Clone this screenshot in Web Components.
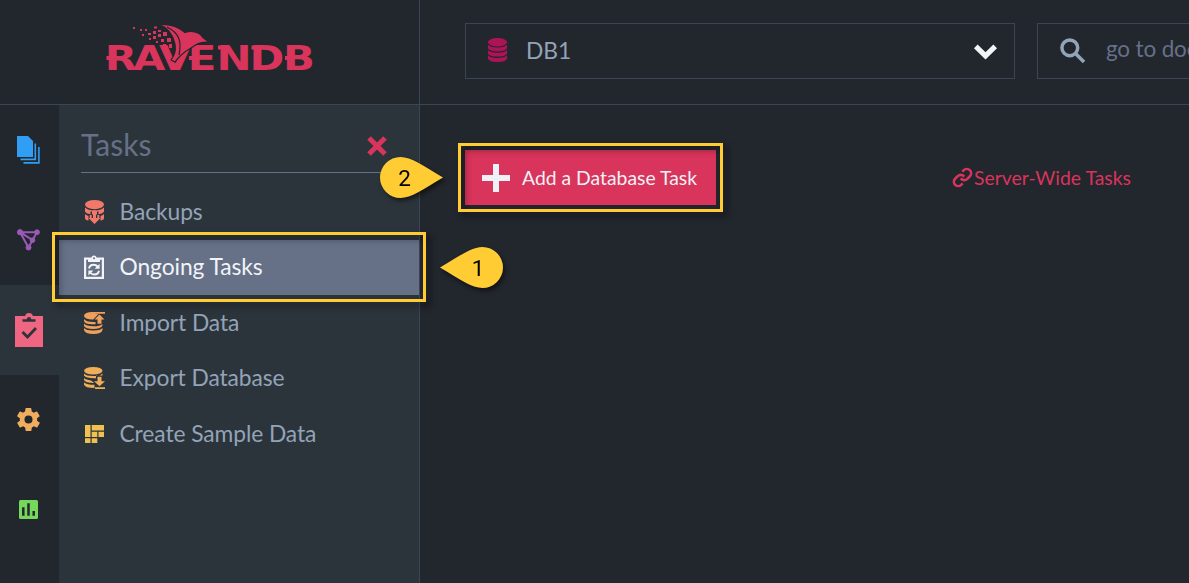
<!DOCTYPE html>
<html lang="en">
<head>
<meta charset="utf-8">
<title>RavenDB Studio</title>
<style>
html,body{margin:0;height:100%;overflow:hidden;background:#22262d}
body{font-family:Lato,sans-serif;color:#93a3b8}
</style>
</head>
<body>
<studio-app></studio-app>
<script>
const define = (name, html, setup) => customElements.define(name, class extends HTMLElement {
  constructor() {
    super();
    this.attachShadow({mode: 'open'}).innerHTML = html;
  }
  connectedCallback() { if (setup) setup(this, this.shadowRoot); }
});

const icons = {
  documents: ['0 0 23 28', '<path fill="#2f9ef4" d="M0 0h11l5 5v16H0z"/><path fill="none" stroke="#2f9ef4" stroke-width="1.6" d="M18.300 7.500v15.900H3.500M21.900 11v15.900H6.500"/>'],
  graph: ['0 0 23 22', '<g stroke="#9b59b6" fill="#9b59b6"><path fill="none" stroke-width="2" d="M3 3.200H20M3 3.200L11.500 18.500M3 3.200L15.500 11.200L20 3.200M15.500 11.200L11.500 18.500"/><circle cx="3" cy="3.200" r="2.600"/><circle cx="20" cy="3.200" r="2.400"/><circle cx="15.500" cy="11.200" r="2.300"/><circle cx="11.500" cy="18.500" r="2.500"/></g>'],
  tasks: ['0 0 28 34', '<path fill="#f06581" d="M0 3h10.200Q10.600 0 14 0t3.800 3H28v31H0z"/><path fill="#2c343b" d="M7.500 6.200h4.300a2.200 2.200 0 0 1 4.400 0h4.300v2.500h-13z"/><path fill="none" stroke="#2c343b" stroke-width="2.800" d="M7.500 19l5 5 8.500-9"/>'],
  gear: ['2 2 20 20', '<path fill="#f0ad5e" d="M19.400 13c0-.3.100-.6.100-1s0-.7-.1-1l2.100-1.600a.5.500 0 0 0 .1-.6l-2-3.500a.5.500 0 0 0-.6-.2l-2.500 1a7 7 0 0 0-1.700-1l-.4-2.600a.5.500 0 0 0-.5-.5h-4a.5.500 0 0 0-.5.500L9 5.100a7 7 0 0 0-1.700 1l-2.500-1a.5.500 0 0 0-.6.200l-2 3.500a.5.500 0 0 0 .1.600L4.500 11a8 8 0 0 0 0 2l-2.100 1.600a.5.500 0 0 0-.1.600l2 3.500c.1.200.4.300.6.200l2.500-1a7 7 0 0 0 1.700 1l.4 2.600c0 .3.200.5.500.5h4c.3 0 .5-.2.500-.5l.4-2.600a7 7 0 0 0 1.700-1l2.500 1c.2.100.5 0 .6-.2l2-3.500a.5.500 0 0 0-.1-.6zM12 15.500a3.500 3.500 0 1 1 0-7 3.500 3.500 0 0 1 0 7z"/>'],
  stats: ['0 0 19 19', '<rect width="19" height="19" rx="1.500" fill="#76d85b"/><path stroke="#22262d" stroke-width="2.500" d="M4.300 7.200v8.500M9.500 3.300v12.400M14.700 11v4.700"/>'],
  backups: ['0 0 19 24', '<g fill="#f2786b"><ellipse cx="9.500" cy="4.600" rx="9.500" ry="4.600"/><path d="M0 7.500q3 3 9.500 3t9.500-3v4.200q-1.500 2-5.500 2.500V11.600H12v2.800H7v-2.800H5.500v2.600Q1.500 13.700 0 11.700zM0 14q1.500 1.500 3.500 2v4.500Q0 20 0 18zM19 14q-1.500 1.500-3.500 2v4.500Q19 20 19 18z"/><path d="M8 10.500h3V18h4.500l-6 6-6-6H8zM4.700 15h2v4h-2zM12.300 15h2v4h-2z"/></g>'],
  ongoing: ['0 0 20 24', '<path fill="none" stroke="#f2f4f8" stroke-width="2.200" d="M1.100 3.600h17.800v19.300H1.100z"/><path fill="#f2f4f8" d="M4 3h3.500a2.500 2.500 0 0 1 5 0H16v4H4z"/><circle cx="10" cy="3.200" r="1" fill="#667087"/><path fill="none" stroke="#f2f4f8" stroke-width="1.900" d="M5 13.500q.7-3.700 4.700-3.700 2.400 0 4.200 2M15 15.700q-.8 3.800-4.800 3.800-2.500 0-4.200-2"/><path fill="#f2f4f8" d="M15.600 8.800v5h-5zM4.400 20.500v-5h5z"/>'],
  import: ['0 0 21 22', '<g fill="#efa05a"><path d="M0 3.500Q1 0 8 0h3.500v2h3L9.300 7.500H7Q0 7 0 3.500z"/><path d="M0 7q2 3 9.300 3h2.200v2.200Q1 13 0 9zM0 11.500q2 2.800 9.300 2.800 7 0 9-2.300v2q-2 3-9.300 3T0 14zM0 16q2 2.500 9.300 2.500T18.500 16v2q-1 4-9.200 4T0 18z"/><path d="M10 0h11v1.700H10zM15.500 2.500l5 5h-3v4.300h-4V7.500h-3z"/></g>'],
  export: ['0 0 21 22', '<g fill="#f0ae5a"><ellipse cx="9.300" cy="3.800" rx="9.200" ry="3.800"/><path d="M0 6.500q2 2.500 9.300 2.500t9.200-2.500v2H12v2.700Q2 11.500 0 8.500zM0 11q2 2 7 2.400l3.300 2.700Q1 16 0 13zM0 15.500q3 2.300 10.500 2.300v3.300Q1 21 0 17.500z"/><path d="M13.500 9.800h4v4.500h3.500l-5.500 5-5.500-5h3.500zM11 20.200h10V22H11z"/></g>'],
  sample: ['0 0 19 18', '<path fill="#f0c150" d="M0 0h5.500v12H0zM6.700 0H19v5.500H6.700zM6.700 6.700h5.600V12H6.700zM13.500 6.700H19V12h-5.500zM0 13.200h5.500V18H0zM6.700 13.200h5.600V18H6.700z"/>'],
  database: ['0 0 18 24', '<g fill="#ad1457"><ellipse cx="9" cy="4.200" rx="9" ry="4.200"/><path d="M0 6.500q2 3 9 3t9-3v4q-2 3-9 3t-9-3zM0 12q2 2.800 9 2.800t9-2.800v3.700q-2 2.900-9 2.900t-9-2.900zM0 17.200q2 2.700 9 2.700t9-2.700v3.300Q17 24 9 24T0 20.500z"/></g>'],
  chevron: ['0 0 23 16', '<path fill="none" stroke="#f1f6f8" stroke-width="5.200" d="M1.800 2.300l9.700 9.500 9.700-9.500"/>'],
  search: ['0 0 26 26', '<circle cx="9.800" cy="9.800" r="7.900" fill="none" stroke="#93a3b8" stroke-width="3.500"/><path stroke="#93a3b8" stroke-width="3.500" d="M15 15l9 9"/>'],
  close: ['0 0 20 20', '<path stroke="#d9345b" stroke-width="5" d="M2 2l16 16M18 2L2 18"/>'],
  plus: ['0 0 28 28', '<path stroke="#f0f1f6" stroke-width="6" d="M14 0v28M0 14h28"/>'],
  link: ['1 1 22 22', '<path fill="none" stroke="#d9345b" stroke-width="3" d="M10 13a5 5 0 0 0 7.540.540l3-3a5 5 0 0 0-7.070-7.070l-1.720 1.710M14 11a5 5 0 0 0-7.540-.540l-3 3a5 5 0 0 0 7.070 7.070l1.710-1.710"/>']
};

define('ui-icon', '<style>:host{display:block;flex:none}svg{display:block;width:100%;height:100%;overflow:visible}</style><svg preserveAspectRatio="none"></svg>', (el, root) => {
  const [box, body] = icons[el.getAttribute('name')];
  const svg = root.querySelector('svg');
  svg.setAttribute('viewBox', box);
  svg.innerHTML = body;
  const [, , w, h] = box.split(' ');
  el.style.width = (el.getAttribute('w') || w) + 'px';
  el.style.height = (el.getAttribute('h') || h) + 'px';
});

define('raven-logo', `<style>:host{display:block;width:210px;height:48px}svg{display:block;overflow:visible}
text{font:bold 33.500px "DejaVu Sans",sans-serif;fill:#d9345b}</style>
<svg width="210" height="48" viewBox="0 0 210 48">
<text transform="scale(1.25 1)" x="-0.300 22.400 43.200 66.200 89.200 115.600 142.500" y="44.800">RAVENDB</text>
<path fill="#d9345b" d="M1.500 31h4v4h-4zM84 31h4v4h-4zM180 31h4v4h-4zM113 20.500h4v4h-4zM146.500 20.500h4v4h-4z"/>
<path fill="#d9345b" stroke="#22262d" stroke-width="1.200" d="M54-.5C66-1 74 2 80 7.500c6-2 14-1 17 4 2 2 5 4 7.500 6C97 16 91 19 86 23 79 27 75 30 70 37l-4-2c4-6 5-9 4-16C68 10 64 3 54-.5z"/>
<path fill="none" stroke="#22262d" stroke-width="1.200" d="M62 2c12 6 15 14 12 28"/>
<path fill="#d9345b" d="M28 2h2v2h-2zM35 4h2v2h-2zM40 4h2v2h-2zM49 1.500h3v2h-3zM37 9h2v2h-2zM43 8h3v2h-3zM48 6h3v3h-3zM53 5h3v2h-3zM44 13h2v2h-2zM48 11h3v3h-3zM53 9h3v3h-3zM58 7h4v4h-4zM51 16h2v2h-2zM56 14h3v3h-3zM62 13h4v4h-4zM58 19h3v2h-3zM64 19h3v4h-3z"/>
</svg>`);

define('rail-item', `<style>:host{display:flex;box-sizing:border-box;height:90px;align-items:center;justify-content:center;padding:0 2px 1px 0}:host([active]){background:#2c343b;padding-bottom:0}</style><slot></slot>`);

define('menu-item', `<style>:host{display:flex;box-sizing:border-box;height:55.500px;align-items:center;padding-left:24.500px;font-size:22.800px;color:#93a3b8;white-space:nowrap}
:host([active]){background:#667087;color:#f2f4f8}
.i{width:22px;margin:0 14px 0 0;display:flex;justify-content:center}
:host([active]) .i{width:21px;margin:0 15px 1px 0}
.t{letter-spacing:-.08px;padding-bottom:2px}</style><span class="i"><slot name="icon"></slot></span><span class="t"><slot></slot></span>`);

define('side-panel', `<style>:host{display:block;width:360px;background:#2c343b;border-right:1px solid #3b4554}
header{display:flex;height:67px;margin:0 22px 11px;border-bottom:1px solid #667087;align-items:center;justify-content:space-between;font-size:30px;color:#667087}
header ui-icon{margin:15px 10px 0 0}header span{margin-top:11px}</style>
<header><span>Tasks</span><ui-icon name="close"></ui-icon></header>
<menu-item><ui-icon slot="icon" name="backups"></ui-icon>Backups</menu-item>
<menu-item active><ui-icon slot="icon" name="ongoing"></ui-icon>Ongoing Tasks</menu-item>
<menu-item><ui-icon slot="icon" name="import"></ui-icon>Import Data</menu-item>
<menu-item><ui-icon slot="icon" name="export"></ui-icon>Export Database</menu-item>
<menu-item><ui-icon slot="icon" name="sample"></ui-icon>Create Sample Data</menu-item>`);

define('top-bar', `<style>:host{display:flex;height:104px;border-bottom:1px solid #3b4554;overflow:hidden}
.brand{width:419px;flex:none;border-right:1px solid #3b4554;display:flex;box-sizing:content-box;align-items:center;justify-content:center}
raven-logo{margin-top:-6px}
.field{box-sizing:border-box;height:56px;margin-top:23px;border:1px solid #3b4554;display:flex;align-items:center;flex:none;font-size:22.800px;padding-bottom:2px}
.db{width:550px;margin-left:45px;padding-left:22px;padding-right:17px}.db span{margin-left:19px;flex:1}.db ui-icon:last-child{margin-top:3px}
.search{width:300px;margin-left:22px;padding-left:22px;color:#667087;white-space:nowrap;font-size:22.500px}.search ui-icon{margin-top:1px}.search span{margin:-4px 0 0 20px;letter-spacing:-.15px}</style>
<div class="brand"><raven-logo></raven-logo></div>
<div class="field db"><ui-icon name="database" w="19"></ui-icon><span>DB1</span><ui-icon name="chevron"></ui-icon></div>
<div class="field search"><ui-icon name="search"></ui-icon><span>go to doc</span></div>`);

define('task-button', `<style>:host{display:flex;width:251px;height:55px;box-sizing:border-box;padding-left:17px;align-items:center;background:#d9345b;color:#f0f1f6;font-size:19.350px;white-space:nowrap}span{margin-left:12px}</style><ui-icon name="plus"></ui-icon><span><slot></slot></span>`);

define('server-link', `<style>:host{display:flex;align-items:center;color:#d9345b;font-size:19.400px;white-space:nowrap;height:55px}span{margin-left:1.500px}ui-icon{margin:0 .5px 1px 0}</style><ui-icon name="link" w="19" h="19"></ui-icon><span><slot></slot></span>`);

define('highlight-frame', `<style>:host{display:block;position:absolute;box-sizing:border-box;border:3px solid #ffcc33;filter:drop-shadow(4px 4px 3px rgba(0,0,0,.5))}</style>`);

define('callout-pin', `<style>:host{display:block;position:absolute;width:63px;height:41px;filter:drop-shadow(2px 3px 2px rgba(0,0,0,.5))}
svg{display:block;overflow:visible}:host([flip]) path{transform:translateX(63px) scaleX(-1)}text{font:22.500px Roboto,sans-serif;fill:#000;text-anchor:middle}</style>
<svg width="63" height="41"><path fill="#ffcc33" d="M20.500 0C31 0 43 8.500 63 20.500 43 32.500 31 41 20.500 41a20.500 20.500 0 0 1 0-41z"/><text y="29"></text></svg>`, (el, root) => {
  const t = root.querySelector('text');
  t.textContent = el.getAttribute('label');
  t.setAttribute('x', el.hasAttribute('flip') ? 38 : 24.5);
});

define('studio-app', `<style>:host{display:flex;flex-direction:column;position:relative;height:583px;overflow:hidden;background:#22262d}
.body{display:flex;flex:1}nav{width:59px;flex:none}
main{flex:1;display:flex;justify-content:space-between;align-items:flex-start;padding:45px 58px 0 45px}
.f1{left:52px;top:232px;width:374px;height:70px}.f2{left:458px;top:143px;width:265px;height:69px}
.c1{left:440px;top:247px}.c2{left:380px;top:157px}</style>
<top-bar></top-bar>
<div class="body">
<nav>
<rail-item><ui-icon name="documents"></ui-icon></rail-item>
<rail-item><ui-icon name="graph"></ui-icon></rail-item>
<rail-item active><ui-icon name="tasks"></ui-icon></rail-item>
<rail-item><ui-icon name="gear" w="23" h="23"></ui-icon></rail-item>
<rail-item><ui-icon name="stats"></ui-icon></rail-item>
</nav>
<side-panel></side-panel>
<main><task-button>Add a Database Task</task-button><server-link>Server-Wide Tasks</server-link></main>
</div>
<highlight-frame class="f1"></highlight-frame><highlight-frame class="f2"></highlight-frame>
<callout-pin class="c1" flip label="1"></callout-pin><callout-pin class="c2" label="2"></callout-pin>`);
</script>
</body>
</html>
